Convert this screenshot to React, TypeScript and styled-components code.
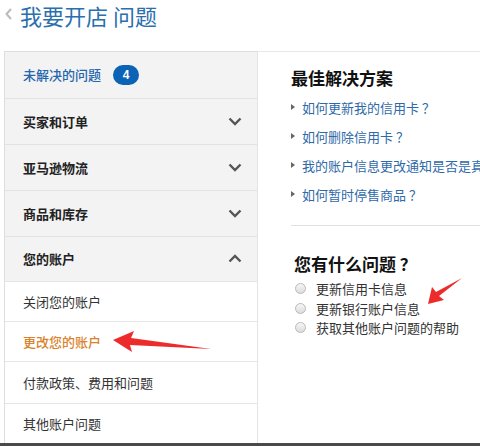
import React from 'react'
import styled, { createGlobalStyle } from 'styled-components'

const GlobalStyle = createGlobalStyle`
  html, body {
    margin: 0;
    padding: 0;
    background: #fff;
  }
  body {
    font-family: "Noto Sans CJK SC", "Liberation Sans", sans-serif;
    width: 480px;
    height: 446px;
    overflow: hidden;
  }
`

const Page = styled.div`
  position: relative;
  width: 480px;
  height: 446px;
  display: flex;
  flex-direction: column;
  overflow: hidden;
`

const Header = styled.div`
  display: flex;
  align-items: center;
  height: 32px;
  padding-left: 4px;
  gap: 6px;
`

const BackIcon = styled.svg`
  width: 10px;
  height: 14px;
  margin-top: -4px;
`

const Title = styled.h1`
  margin: 0;
  font-size: 22px;
  font-weight: 400;
  color: #2b6fae;
  line-height: 32px;
  margin-top: -2px;
  white-space: nowrap;
`

const Body = styled.div`
  display: flex;
  margin-top: 19px;
  flex: 1;
  min-height: 0;
`

const Sidebar = styled.div`
  flex: 0 0 254px;
  width: 254px;
  margin-left: 4px;
  border: 1px solid #dedede;
  border-bottom: none;
  border-right: 1px solid #e4e4e4;
  box-sizing: border-box;
  display: flex;
  flex-direction: column;
`

const GroupRow = styled.div<{ $first?: boolean }>`
  height: 46px;
  box-sizing: border-box;
  background: #f3f3f4;
  border-top: ${({ $first }) => ($first ? 'none' : '1px solid #e2e2e2')};
  display: flex;
  align-items: center;
  justify-content: space-between;
  padding: 0 15px 0 18px;
`

const GroupLabel = styled.span<{ $active?: boolean }>`
  font-size: 13px;
  font-weight: ${({ $active }) => ($active ? 500 : 700)};
  color: ${({ $active }) => ($active ? '#2566ad' : '#222')};
  display: flex;
  align-items: center;
  gap: 12px;
`

const Badge = styled.span`
  display: inline-flex;
  align-items: center;
  justify-content: center;
  width: 26px;
  height: 20px;
  border-radius: 10px;
  background: #0b63b6;
  color: #fff;
  font-family: "Liberation Sans", sans-serif;
  font-weight: 700;
  font-size: 12px;
`

const Chevron = styled.svg`
  width: 14px;
  height: 9px;
`

const SubRow = styled.div<{ $selected?: boolean; $h: number }>`
  height: ${({ $h }) => $h}px;
  box-sizing: border-box;
  background: #fff;
  border-top: 1px solid #e6e6e6;
  display: flex;
  align-items: center;
  padding-left: 18px;
  font-size: 13px;
  color: ${({ $selected }) => ($selected ? '#d9822b' : '#333')};
  font-weight: ${({ $selected }) => ($selected ? 500 : 400)};
`

const Content = styled.div`
  flex: 1;
  min-width: 0;
  border-top: 1px solid #e8e8e8;
  padding: 13px 0 0 33px;
  display: flex;
  flex-direction: column;
  overflow: hidden;
`

const SectionTitle = styled.h2`
  margin: 0;
  font-size: 17px;
  font-weight: 700;
  color: #111;
  line-height: 26px;
  white-space: nowrap;
`

const LinkList = styled.ul`
  list-style: none;
  margin: 6px 0 0;
  padding: 0;
  display: flex;
  flex-direction: column;
  gap: 9px;
`

const LinkItem = styled.li`
  display: flex;
  align-items: center;
  gap: 7px;
  white-space: nowrap;
  height: 20px;
  font-size: 13px;
  color: #2f6aa8;
`

const Bullet = styled.span`
  flex: none;
  width: 0;
  height: 0;
  border-top: 3.5px solid transparent;
  border-bottom: 3.5px solid transparent;
  border-left: 4px solid #666;
`

const Divider = styled.hr`
  margin: 21px 0 0;
  border: none;
  border-top: 1px solid #e2e2e2;
`

const Question = styled.div`
  margin-top: 25px;
  margin-left: 3px;
  display: flex;
  flex-direction: column;
`

const RadioList = styled.div`
  display: flex;
  flex-direction: column;
  margin-top: 2px;
`

const RadioRow = styled.label`
  display: flex;
  align-items: center;
  gap: 10px;
  height: 19.5px;
  font-size: 13px;
  color: #333;
  white-space: nowrap;
`

const RadioDot = styled.span`
  flex: none;
  width: 11px;
  height: 11px;
  border-radius: 50%;
  border: 1px solid #b9b9b9;
  background: linear-gradient(#f6f6f6, #dcdcdc);
  box-sizing: border-box;
  margin-left: 1px;
`

const BottomBar = styled.div`
  height: 3px;
  background: #4a4a4a;
`

const Arrow = styled.svg`
  position: absolute;
  left: 0;
  top: 0;
  pointer-events: none;
`

const groups = ['买家和订单', '亚马逊物流', '商品和库存']
const subs = [
  { label: '关闭您的账户', h: 40 },
  { label: '更改您的账户', h: 40, selected: true },
  { label: '付款政策、费用和问题', h: 42 },
  { label: '其他账户问题', h: 40 },
]
const links = ['如何更新我的信用卡 ？', '如何删除信用卡 ？', '我的账户信息更改通知是否是真的？', '如何暂时停售商品 ？']
const options = ['更新信用卡信息', '更新银行账户信息', '获取其他账户问题的帮助']

function ChevronIcon({ up }: { up?: boolean }) {
  return (
    <Chevron viewBox="0 0 14 9">
      <path
        d={up ? 'M1.5 7.5 L7 2 L12.5 7.5' : 'M1.5 1.5 L7 7 L12.5 1.5'}
        fill="none"
        stroke="#555"
        strokeWidth="2.4"
      />
    </Chevron>
  )
}

export default function App() {
  return (
    <Page>
      <GlobalStyle />
      <Header>
        <BackIcon viewBox="0 0 10 14">
          <path d="M7 2 L2.5 7 L7 12" fill="none" stroke="#bbb" strokeWidth="2" />
        </BackIcon>
        <Title>我要开店 问题</Title>
      </Header>
      <Body>
        <Sidebar>
          <GroupRow $first>
            <GroupLabel $active>
              未解决的问题 <Badge>4</Badge>
            </GroupLabel>
          </GroupRow>
          {groups.map(g => (
            <GroupRow key={g}>
              <GroupLabel>{g}</GroupLabel>
              <ChevronIcon />
            </GroupRow>
          ))}
          <GroupRow>
            <GroupLabel>您的账户</GroupLabel>
            <ChevronIcon up />
          </GroupRow>
          {subs.map(s => (
            <SubRow key={s.label} $h={s.h} $selected={s.selected}>
              {s.label}
            </SubRow>
          ))}
        </Sidebar>
        <Content>
          <SectionTitle>最佳解决方案</SectionTitle>
          <LinkList>
            {links.map(l => (
              <LinkItem key={l}>
                <Bullet />
                {l}
              </LinkItem>
            ))}
          </LinkList>
          <Divider />
          <Question>
            <SectionTitle>您有什么问题 ？</SectionTitle>
            <RadioList>
              {options.map(o => (
                <RadioRow key={o}>
                  <RadioDot />
                  {o}
                </RadioRow>
              ))}
            </RadioList>
          </Question>
        </Content>
      </Body>
      <BottomBar />
      <Arrow viewBox="0 0 480 446" width="480" height="446">
        <path d="M113 340 L134 331 L131 338 L211 349 L130 345 L132 352 Z" fill="#ee2b2b" />
        <path d="M428 304 L432 287 L436 292 L462 278 L439 296 L444 300 Z" fill="#ee2b2b" />
      </Arrow>
    </Page>
  )
}
